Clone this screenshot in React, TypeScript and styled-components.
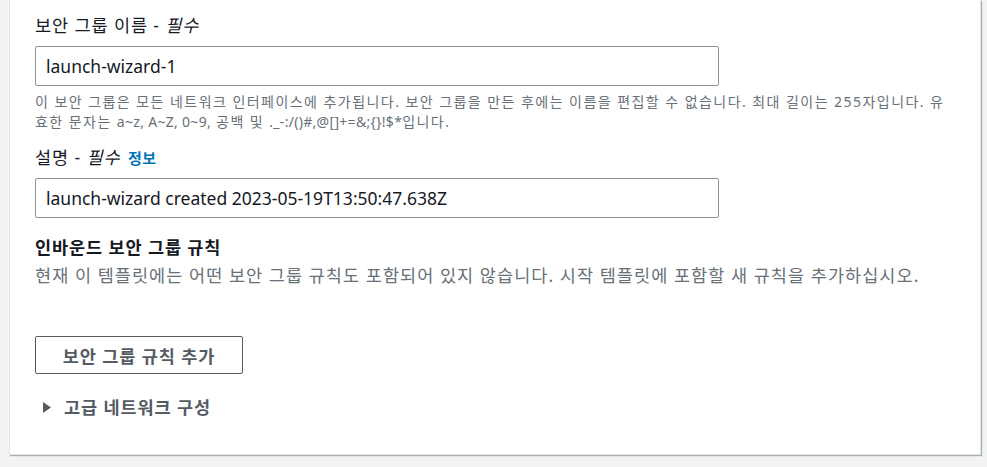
import React from 'react';
import styled, { createGlobalStyle } from 'styled-components';

const GlobalStyle = createGlobalStyle`
  body {
    margin: 0;
    background: #f2f3f3;
    font-family: 'Noto Sans', 'Noto Sans CJK KR', sans-serif;
    color: #16191f;
  }
`;

function App() {
  return (
    <>
      <GlobalStyle />
      <Page>
        <Panel>
          <Field>
            <Label>
              보안 그룹 이름 - <Required>필수</Required>
            </Label>
            <Input defaultValue="launch-wizard-1" />
            <Help>
              이 보안 그룹은 모든 네트워크 인터페이스에 추가됩니다. 보안 그룹을 만든 후에는 이름을 편집할 수 없습니다. 최대 길이는 255자입니다. 유효한 문자는 <Latin>a~z, A~Z, 0~9,</Latin> 공백 및 <Latin>._-:/()#,@[]+=&amp;;{'{}'}!$*</Latin>입니다.
            </Help>
          </Field>
          <Field>
            <Label>
              설명 - <Required>필수</Required> <InfoLink href="#">정보</InfoLink>
            </Label>
            <Input defaultValue="launch-wizard created 2023-05-19T13:50:47.638Z" />
          </Field>
          <Section>
            <Heading>인바운드 보안 그룹 규칙</Heading>
            <Description>
              현재 이 템플릿에는 어떤 보안 그룹 규칙도 포함되어 있지 않습니다. 시작 템플릿에 포함할 새 규칙을 추가하십시오.
            </Description>
          </Section>
          <Button type="button">보안 그룹 규칙 추가</Button>
          <Expander>
            <svg width="8" height="11" viewBox="0 0 8 11">
              <path d="M0 0 L8 5.5 L0 11 Z" fill="#545b64" />
            </svg>
            <span>고급 네트워크 구성</span>
          </Expander>
        </Panel>
      </Page>
    </>
  );
}

const Page = styled.div`
  width: 987px;
  height: 467px;
  padding: 0 6px 0 9px;
  box-sizing: border-box;
`;

const Panel = styled.div`
  background: #fff;
  border: 1px solid #e3e5e6;
  border-top: none;
  box-shadow: 1px 1px 1px 0 rgba(0, 28, 36, 0.3);
  padding: 14px 25px 35px 25px;
  box-sizing: border-box;
  height: 455px;
  display: flex;
  flex-direction: column;
  align-items: flex-start;
`;

const Field = styled.div`
  display: flex;
  flex-direction: column;
  width: 100%;
  margin-bottom: 14px;
`;

const Label = styled.div`
  font-size: 17.5px;
  letter-spacing: 0.9px;
  line-height: 22px;
  height: 22px;
  color: #16191f;
  margin-bottom: 10px;
  white-space: nowrap;
`;

const Required = styled.i`
  font-style: italic;
`;

const InfoLink = styled.a`
  font-size: 15px;
  font-weight: 700;
  line-height: 1;
  color: #0073bb;
  text-decoration: none;
  letter-spacing: 0.6px;
  margin-left: 2px;
`;

const Input = styled.input`
  width: 684px;
  height: 40px;
  box-sizing: border-box;
  border: 1px solid #879596;
  border-radius: 2px;
  padding: 0 10px;
  font-family: 'Noto Sans', 'Noto Sans CJK KR', sans-serif;
  font-size: 17.5px;
  color: #16191f;
  outline: none;
`;

const Help = styled.div`
  margin-top: 6px;
  font-size: 14px;
  letter-spacing: 1.45px;
  line-height: 20px;
  color: #687078;
`;

const Latin = styled.span`
  letter-spacing: 0.3px;
`;

const Section = styled.div`
  margin-top: 3px;
  display: flex;
  flex-direction: column;
`;

const Heading = styled.div`
  font-size: 17.5px;
  letter-spacing: 0.9px;
  font-weight: 700;
  line-height: 24px;
`;

const Description = styled.div`
  margin-top: 4px;
  font-size: 17.5px;
  letter-spacing: 1.05px;
  line-height: 24px;
  color: #687078;
  white-space: nowrap;
`;

const Button = styled.button`
  margin-top: 49px;
  width: 208px;
  height: 38px;
  padding: 0;
  background: #fff;
  border: 1px solid #545b64;
  border-radius: 2px;
  font-family: 'Noto Sans', 'Noto Sans CJK KR', sans-serif;
  font-size: 17.5px;
  letter-spacing: 0.9px;
  font-weight: 700;
  color: #545b64;
  cursor: pointer;
`;

const Expander = styled.div`
  margin-top: 22px;
  margin-left: 8px;
  display: flex;
  align-items: center;
  gap: 13px;
  font-size: 17.5px;
  letter-spacing: 0.9px;
  font-weight: 700;
  line-height: 22px;
  color: #545b64;
`;

export default App;
